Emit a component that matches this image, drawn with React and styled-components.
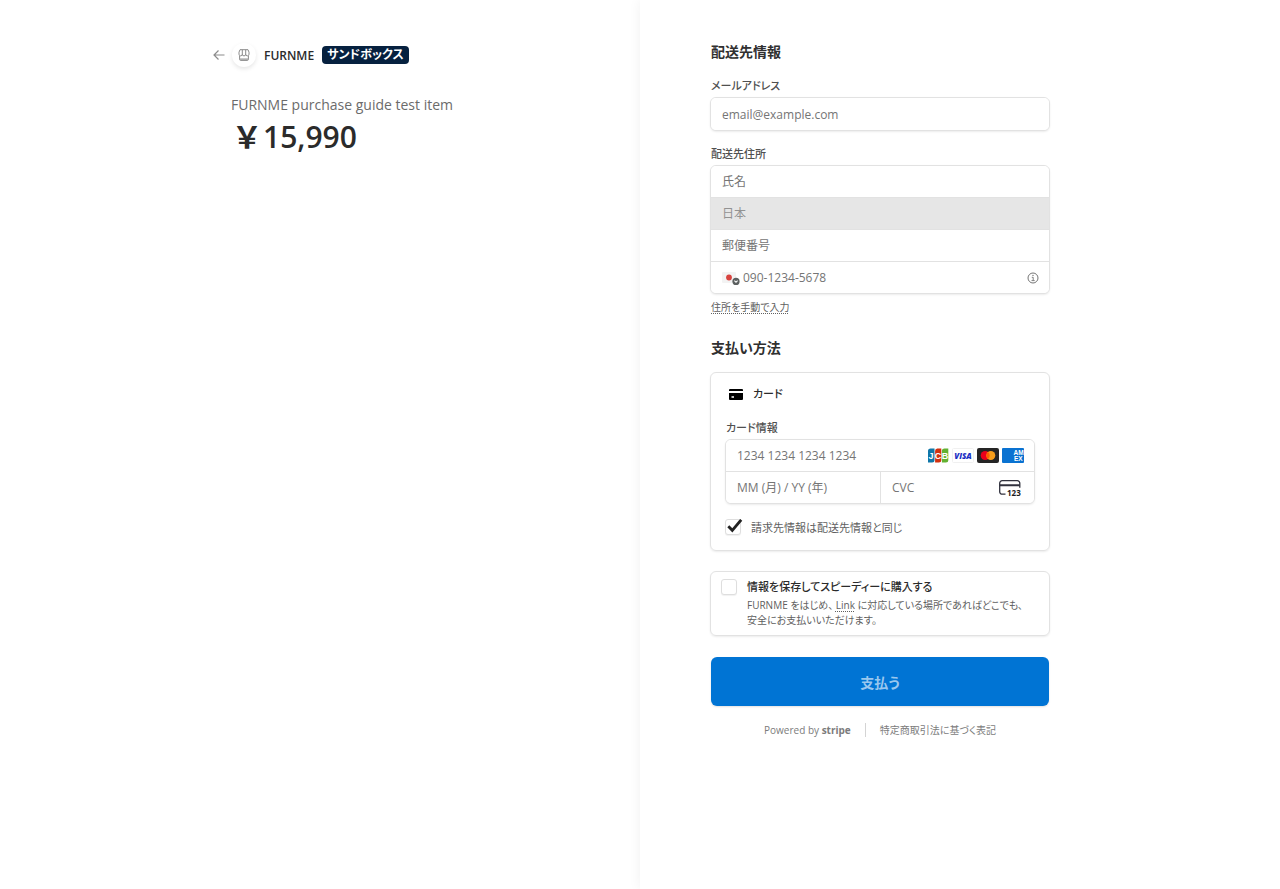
import React from "react";
import styled, { createGlobalStyle } from "styled-components";

function App() {
  return (
    <>
      <GlobalStyle />
      <Page>
        <Overview>
          <OverviewInner>
            <Business>
              <BackLink href="#back" aria-label="戻る">
                <ArrowIcon />
              </BackLink>
              <Avatar>
                <StoreIcon />
              </Avatar>
              <BusinessName>FURNME</BusinessName>
              <Badge>サンドボックス</Badge>
            </Business>
            <ItemName>FURNME purchase guide test item</ItemName>
            <Price>
              <Yen>￥</Yen>15,990
            </Price>
          </OverviewInner>
        </Overview>
        <Payment>
          <Form onSubmit={(e) => e.preventDefault()}>
            <Heading>配送先情報</Heading>
            <Label htmlFor="email">メールアドレス</Label>
            <FieldGroup>
              <Field>
                <Input id="email" type="email" placeholder="email@example.com" />
              </Field>
            </FieldGroup>

            <Label htmlFor="name" $spaced>
              配送先住所
            </Label>
            <FieldGroup>
              <Field $compact>
                <Input id="name" placeholder="氏名" />
              </Field>
              <Field $compact $disabled>
                <Select aria-label="国" disabled defaultValue="JP">
                  <option value="JP">日本</option>
                </Select>
              </Field>
              <Field $compact>
                <Input aria-label="郵便番号" placeholder="郵便番号" />
              </Field>
              <Field $compact>
                <FlagButton type="button" aria-label="国番号">
                  <FlagIcon />
                </FlagButton>
                <Input
                  type="tel"
                  aria-label="電話番号"
                  placeholder="090-1234-5678"
                />
                <IconButton type="button" aria-label="電話番号について">
                  <InfoIcon />
                </IconButton>
              </Field>
            </FieldGroup>
            <ManualLink href="#address">住所を手動で入力</ManualLink>

            <Heading $spaced>支払い方法</Heading>
            <MethodBox>
              <MethodTitle>
                <CardIcon />
                カード
              </MethodTitle>
              <Label htmlFor="card">カード情報</Label>
              <FieldGroup>
                <Field $compact>
                  <Input id="card" placeholder="1234 1234 1234 1234" />
                  <Brands>
                    <JcbIcon />
                    <VisaIcon />
                    <MastercardIcon />
                    <AmexIcon />
                  </Brands>
                </Field>
                <SplitRow>
                  <Field $compact>
                    <Input aria-label="有効期限" placeholder="MM (月) / YY (年)" />
                  </Field>
                  <Field $compact>
                    <Input aria-label="セキュリティコード" placeholder="CVC" />
                    <CvcIcon />
                  </Field>
                </SplitRow>
              </FieldGroup>
              <BillingRow>
                <CheckWrap>
                  <Checkbox id="billing" defaultChecked />
                  <CheckMark />
                </CheckWrap>
                <label htmlFor="billing">請求先情報は配送先情報と同じ</label>
              </BillingRow>
            </MethodBox>

            <SaveBox>
              <Checkbox id="save" />
              <div>
                <SaveTitle htmlFor="save">
                  情報を保存してスピーディーに購入する
                </SaveTitle>
                <SaveText>
                  FURNME をはじめ、 <a href="#link">Link</a>{" "}
                  に対応している場所であればどこでも、
                  <br />
                  安全にお支払いいただけます。
                </SaveText>
              </div>
            </SaveBox>

            <PayButton type="submit">支払う</PayButton>
            <Footer>
              <a href="#stripe">
                Powered by <b>stripe</b>
              </a>
              <FooterDivider />
              <a href="#legal">特定商取引法に基づく表記</a>
            </Footer>
          </Form>
        </Payment>
      </Page>
    </>
  );
}

export default App;

const ArrowIcon = () => (
  <svg width="12" height="12" viewBox="0 0 12 12" fill="none" stroke="#8c8c8c" strokeWidth="1.2">
    <path d="M5.5 1.5 1 6l4.5 4.5M1 6h10.5" />
  </svg>
);

const StoreIcon = () => (
  <svg width="12" height="12" viewBox="0 0 12 12" fill="none" stroke="#8a8a8a">
    <path d="M2 .7h8l1 2.500v2a1.600 1.600 0 0 1-3.300 0 1.700 1.700 0 0 1-3.400 0 1.600 1.600 0 0 1-3.300 0v-2z" />
    <path d="M4.300 5.200V.7M7.700 5.200V.7M1.600 7v3.500c0 .5.400.9.900.9h7c.5 0 .9-.4.9-.9V7" />
    <path d="M1.600 9.400h8.800v1.500H1.600z" fill="#a5a5a5" stroke="none" />
  </svg>
);

const FlagIcon = () => (
  <svg width="18" height="14" viewBox="0 0 18 14">
    <rect x="0" y="1" width="14" height="11" rx="1" fill="#f3f3f3" />
    <circle cx="7" cy="6.5" r="2.9" fill="#d8433f" />
    <circle cx="14" cy="10.4" r="3.6" fill="#5c6060" />
    <path d="M12.4 9.7 14 11.3l1.6-1.6" fill="none" stroke="#fff" strokeWidth="1.1" />
  </svg>
);

const InfoIcon = () => (
  <svg width="12" height="12" viewBox="0 0 12 12" fill="none" stroke="#747474">
    <circle cx="6" cy="6" r="5" />
    <path d="M4.8 5.3H6.2v3.2M4.5 8.6h3.2" strokeWidth=".9" />
    <circle cx="6" cy="3.4" r=".7" fill="#747474" stroke="none" />
  </svg>
);

const CardIcon = () => (
  <svg width="14" height="11" viewBox="0 0 14 11">
    <path d="M1 0h12a1 1 0 0 1 1 1v1H0V1a1 1 0 0 1 1-1z" />
    <path d="M0 4h14v6a1 1 0 0 1-1 1H1a1 1 0 0 1-1-1zM2.5 7.3v1.4H5V7.3z" fillRule="evenodd" />
  </svg>
);

const JcbIcon = () => (
  <svg width="22" height="15" viewBox="0 0 22 15">
    <path d="M4 .5h3.500V12A2.500 2.500 0 0 1 5 14.500H1V3A2.500 2.500 0 0 1 4 .5z" fill="#0f76a8" />
    <path d="M11 .5h3.300V12a2.500 2.500 0 0 1-2.500 2.500H8.100V3A2.500 2.500 0 0 1 11 .5z" fill="#d2300f" />
    <path d="M18 .5h3.300V12a2.500 2.500 0 0 1-2.500 2.500h-3.900V3A2.500 2.500 0 0 1 18 .5z" fill="#63b132" />
    <g fill="#fff" fontFamily="Liberation Sans, sans-serif" fontWeight="700" fontSize="9" textAnchor="middle">
      <text x="4" y="10.600">J</text>
      <text x="11" y="10.600">C</text>
      <text x="18" y="10.600">B</text>
    </g>
  </svg>
);

const VisaIcon = () => (
  <svg width="22" height="15" viewBox="0 0 22 15">
    <rect x=".5" y=".5" width="21" height="14" rx="1" fill="#fff" stroke="#f0f0f0" />
    <text
      x="11"
      y="10.500"
      fill="#1a2fc4"
      fontFamily="Open Sans, sans-serif"
      fontWeight="800"
      fontStyle="italic"
      fontSize="8"
      textAnchor="middle"
    >
      VISA
    </text>
  </svg>
);

const MastercardIcon = () => (
  <svg width="22" height="15" viewBox="0 0 22 15">
    <rect width="22" height="15" rx="2" fill="#252525" />
    <circle cx="8.2" cy="7.5" r="4.5" fill="#eb001b" />
    <circle cx="13.8" cy="7.5" r="4.5" fill="#f79e1b" />
    <path d="M11 4a4.5 4.5 0 0 1 0 7 4.5 4.5 0 0 1 0-7z" fill="#ff5f00" />
  </svg>
);

const AmexIcon = () => (
  <svg width="22" height="15" viewBox="0 0 22 15">
    <rect width="22" height="15" rx="1" fill="#0a72d1" />
    <g fill="#fff" fontFamily="Liberation Sans, sans-serif" fontWeight="700" fontSize="6.5">
      <text x="11.5" y="7.2">AM</text>
      <text x="12" y="12.6">EX</text>
    </g>
  </svg>
);

const CvcIcon = () => (
  <svg width="22" height="16" viewBox="0 0 22 16">
    <path
      d="M6.5 14.2H3.2A2.5 2.5 0 0 1 .7 11.7V3.2A2.5 2.5 0 0 1 3.200.7h15.100a2.5 2.5 0 0 1 2.5 2.5v4.5"
      fill="none"
      stroke="#30313d"
      strokeWidth="1.3"
    />
    <path d="M.7 4.3h20v2H.7z" fill="#30313d" />
    <text x="8" y="15.5" fill="#1c1c1c" fontFamily="Open Sans, sans-serif" fontWeight="700" fontSize="8">
      123
    </text>
  </svg>
);

const GlobalStyle = createGlobalStyle`
  * {
    box-sizing: border-box;
  }

  body {
    margin: 0;
    background: #fff;
    color: #2b2b2b;
    font-family: "Open Sans", "Noto Sans CJK JP", sans-serif;
    font-feature-settings: "palt";
    font-size: 11px;
  }

  input,
  select,
  button {
    font: inherit;
    font-feature-settings: inherit;
  }

  svg {
    display: block;
    flex-shrink: 0;
  }
`;

const Page = styled.div`
  display: flex;
  min-height: 100vh;

  @media (max-width: 860px) {
    flex-direction: column;
  }
`;

const Overview = styled.div`
  flex: 0 0 50%;
  display: flex;
  justify-content: flex-end;
  padding: 42px 69px 0 24px;

  @media (max-width: 860px) {
    flex: none;
    justify-content: center;
    padding: 24px;
  }
`;

const OverviewInner = styled.div`
  width: 100%;
  max-width: 340px;
`;

const Business = styled.header`
  display: flex;
  align-items: center;
  height: 26px;
  margin: 0 0 26px -18px;
`;

const BackLink = styled.a`
  margin-right: 7px;
`;

const Avatar = styled.div`
  display: flex;
  align-items: center;
  justify-content: center;
  width: 24px;
  height: 24px;
  border-radius: 50%;
  box-shadow: 0 2px 4px rgba(0, 0, 0, 0.1);
`;

const BusinessName = styled.span`
  margin: 0 8px;
  font-size: 12px;
  font-weight: 600;
`;

const Badge = styled.span`
  padding: 0 5px;
  border-radius: 4px;
  background: #06213f;
  color: #fff;
  font-size: 12px;
  font-weight: 700;
  line-height: 18px;
`;

const ItemName = styled.h1`
  margin: 0;
  color: #6b6b6b;
  font-size: 14px;
  font-weight: 500;
  line-height: 22px;
`;

const Price = styled.div`
  display: flex;
  font-size: 30px;
  font-weight: 600;
  line-height: 42px;
`;

const Yen = styled.span`
  width: 32px;
  font-feature-settings: normal;
  text-align: center;
`;

const Payment = styled.main`
  flex: 1;
  min-width: 0;
  padding: 42px 24px 24px 70px;
  background: #fff;
  box-shadow: 0 0 12px rgba(0, 0, 0, 0.06);

  @media (max-width: 860px) {
    display: flex;
    justify-content: center;
    padding: 24px;
  }
`;

const Form = styled.form`
  width: 100%;
  max-width: 340px;
`;

const Heading = styled.h2`
  margin: ${(props) => (props.$spaced ? "23px" : "0")} 0 14px 1px;
  color: #303030;
  font-size: 14px;
  font-weight: 700;
  line-height: 20px;
`;

const Label = styled.label`
  display: block;
  margin: ${(props) => (props.$spaced ? "13px" : "0")} 0 1px 1px;
  color: #505050;
  font-size: 11px;
  font-weight: 500;
  line-height: 20px;
`;

const FieldGroup = styled.div`
  border: 1px solid #e2e2e2;
  border-radius: 6px;
  background: #fff;
  box-shadow: 0 1px 2px rgba(0, 0, 0, 0.08);
  overflow: hidden;
`;

const Field = styled.div`
  display: flex;
  align-items: center;
  height: ${(props) => (props.$compact ? "31px" : "32px")};
  padding: 0 10px 0 11px;
  background: ${(props) => (props.$disabled ? "#e6e6e6" : "#fff")};

  & + & {
    height: 32px;
    border-top: 1px solid #e2e2e2;
  }
`;

const Input = styled.input`
  flex: 1;
  min-width: 0;
  padding: 0;
  border: 0;
  outline: 0;
  background: none;
  font-size: 12px;

  &::placeholder {
    color: #757575;
    opacity: 1;
  }
`;

const Select = styled.select`
  flex: 1;
  padding: 0;
  border: 0;
  background: none;
  color: #929292;
  font-size: 12px;
  opacity: 1;
  appearance: none;
`;

const IconButton = styled.button`
  padding: 0;
  border: 0;
  background: none;
  cursor: pointer;
`;

const FlagButton = styled(IconButton)`
  margin-right: 3px;
`;

const ManualLink = styled.a`
  display: table;
  margin: 5px 0 0 1px;
  color: #606060;
  font-size: 10px;
  line-height: 16px;
  text-decoration: underline dotted;
  text-underline-offset: 2px;
`;

const MethodBox = styled.section`
  padding: 10px 14px 15px;
  border: 1px solid #e2e2e2;
  border-radius: 6px;
  box-shadow: 0 1px 2px rgba(0, 0, 0, 0.08);
`;

const MethodTitle = styled.h3`
  display: flex;
  align-items: center;
  gap: 10px;
  margin: 0 0 13px 4px;
  font-size: 11px;
  font-weight: 500;
  line-height: 22px;
`;

const Brands = styled.div`
  display: flex;
  gap: 3px;
`;

const SplitRow = styled.div`
  display: grid;
  grid-template-columns: repeat(2, minmax(0, 1fr));
  border-top: 1px solid #e2e2e2;

  ${Field} {
    height: 31px;
    padding-right: 13px;
  }

  ${Field} + ${Field} {
    border-top: 0;
    border-left: 1px solid #e2e2e2;
  }
`;

const BillingRow = styled.div`
  display: flex;
  align-items: center;
  gap: 10px;
  height: 16px;
  margin-top: 15px;
  color: #606060;
  font-size: 11px;
`;

const CheckWrap = styled.div`
  position: relative;
  display: flex;
`;

const Checkbox = styled.input.attrs({ type: "checkbox" })`
  flex-shrink: 0;
  width: 16px;
  height: 16px;
  margin: 0;
  border: 1px solid #dedede;
  border-radius: 3px;
  background: #fff;
  box-shadow: 0 1px 1px rgba(0, 0, 0, 0.06);
  appearance: none;
`;

const CheckSvg = styled.svg`
  position: absolute;
  top: 0;
  left: 2px;
  pointer-events: none;
`;

function CheckMark() {
  return (
    <CheckSvg width="16" height="14" viewBox="0 0 16 14">
      <path d="M1.3 7.2 5.3 11.3 14.2.8" fill="none" stroke="#222" strokeWidth="2.8" />
    </CheckSvg>
  );
}

const SaveBox = styled.section`
  display: flex;
  gap: 10px;
  margin-top: 20px;
  padding: 6px 10px 7px;
  border: 1px solid #e2e2e2;
  border-radius: 6px;
  box-shadow: 0 1px 2px rgba(0, 0, 0, 0.08);

  ${Checkbox} {
    margin-top: 1px;
  }
`;

const SaveTitle = styled.label`
  display: block;
  font-size: 11px;
  font-weight: 500;
  line-height: 18px;
`;

const SaveText = styled.p`
  margin: 2px 0 0;
  color: #606060;
  font-size: 10px;
  line-height: 15px;

  a {
    color: inherit;
    text-decoration: underline dotted;
    text-underline-offset: 2px;
  }
`;

const PayButton = styled.button`
  display: block;
  width: calc(100% - 2px);
  height: 49px;
  margin: 21px 1px 0;
  border: 0;
  border-radius: 6px;
  background: #0074d4;
  color: #99c7ee;
  font-size: 14px;
  font-weight: 700;
  box-shadow: 0 1px 2px rgba(0, 0, 0, 0.12);
  cursor: pointer;
`;

const Footer = styled.footer`
  display: flex;
  align-items: center;
  justify-content: center;
  margin-top: 16px;
  color: #7c7c7c;
  font-size: 10px;
  line-height: 16px;

  a {
    color: inherit;
    text-decoration: none;
  }
`;

const FooterDivider = styled.span`
  width: 1px;
  height: 14px;
  margin: 0 14px;
  background: #d4d4d4;
`;
